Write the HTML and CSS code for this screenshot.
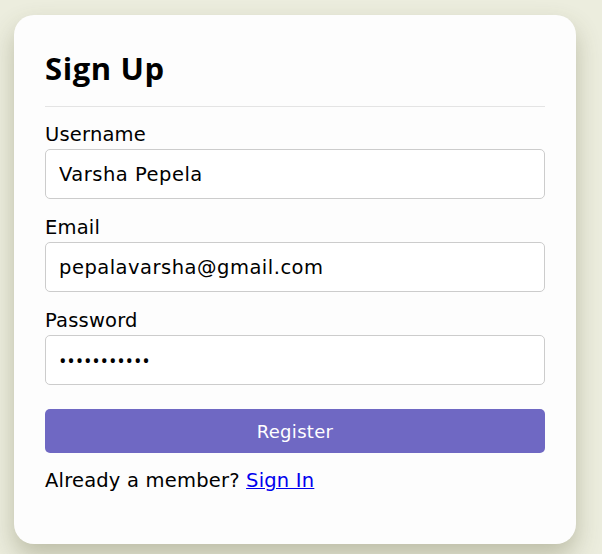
FILE: index.html
```html
<!DOCTYPE html>
<html lang="en">
<head>
<meta charset="utf-8">
<title>Sign Up</title>
<link rel="stylesheet" href="styles.css">
</head>
<body>
  <div class="card">
    <h2 class="title">Sign Up</h2>
    <hr class="divider">
    <form class="form">
      <div class="field">
        <label class="label" for="u">Username</label>
        <input class="input" id="u" type="text" value="Varsha Pepela">
      </div>
      <div class="field">
        <label class="label" for="e">Email</label>
        <input class="input" id="e" type="text" value="pepalavarsha@gmail.com">
      </div>
      <div class="field">
        <label class="label" for="p">Password</label>
        <input class="input input-pass" id="p" type="password" value="abcdefghijk">
      </div>
      <button class="btn" type="button">Register</button>
    </form>
    <p class="foot">Already a member? <a class="link" href="#">Sign In</a></p>
  </div>
</body>
</html>
```

FILE: styles.css
```css
* { box-sizing: border-box; }
html, body { height: 100%; }
body {
  margin: 0;
  padding: 15px 0 0 14px;
  background: #ecedde;
  font-family: "DejaVu Sans", "Open Sans", sans-serif;
  color: #000;
  overflow: hidden;
}
.card {
  width: 562px;
  height: 529px;
  background: #fdfdfd;
  border-radius: 20px;
  padding: 35px 31px 0 31px;
  box-shadow: 0 12px 24px rgba(80, 80, 40, 0.3);
}
.title {
  margin: 0;
  font-family: "Open Sans", sans-serif;
  font-size: 31px;
  line-height: 36px;
  font-weight: 700;
  letter-spacing: 0.6px;
}
.divider {
  margin: 20px 0 14px;
  border: 0;
  border-top: 1px solid #e4e4e4;
  height: 0;
}
.form {
  display: flex;
  flex-direction: column;
  gap: 15px;
}
.field {
  display: flex;
  flex-direction: column;
  gap: 1px;
}
.label {
  font-size: 19.5px;
  line-height: 27px;
  letter-spacing: 0.2px;
}
.input {
  height: 50px;
  width: 100%;
  border: 1px solid #cccccc;
  border-radius: 5px;
  padding: 0 13px;
  font-family: inherit;
  font-size: 19.5px;
  letter-spacing: 0.5px;
  color: #000;
  background: #fff;
  outline: none;
}
.input-pass {
  font-family: "Open Sans", sans-serif;
  font-size: 20px;
  letter-spacing: 0.8px;
}
.btn {
  margin-top: 9px;
  height: 44px;
  width: 100%;
  border: 0;
  border-radius: 5px;
  background: #6f68c3;
  color: #fff;
  font-family: inherit;
  font-size: 18px;
  letter-spacing: 0.3px;
}
.foot {
  margin: 14px 0 0;
  font-size: 19.5px;
  line-height: 27px;
  letter-spacing: 0.2px;
}
.link { color: #0000ee; }
```
